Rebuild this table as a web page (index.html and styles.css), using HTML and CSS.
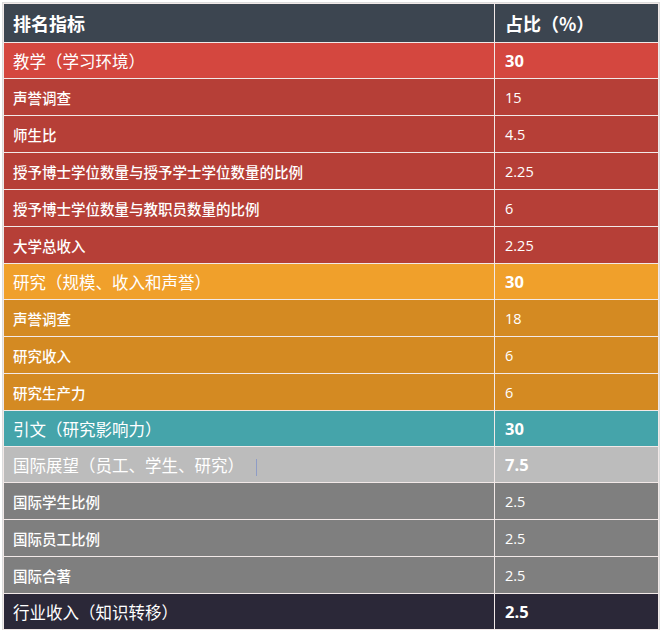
FILE: index.html
```html
<!DOCTYPE html>
<html lang="zh">
<head>
<meta charset="utf-8">
<link rel="stylesheet" href="styles.css">
</head>
<body>
<table class="rank">
  <thead>
    <tr class="head"><th>排名指标</th><th>占比（%）</th></tr>
  </thead>
  <tbody>
    <tr class="cat teach"><td>教学（学习环境）</td><td class="num">30</td></tr>
    <tr class="sub teach-sub"><td>声誉调查</td><td class="num">15</td></tr>
    <tr class="sub teach-sub"><td>师生比</td><td class="num">4.5</td></tr>
    <tr class="sub teach-sub"><td>授予博士学位数量与授予学士学位数量的比例</td><td class="num">2.25</td></tr>
    <tr class="sub teach-sub"><td>授予博士学位数量与教职员数量的比例</td><td class="num">6</td></tr>
    <tr class="sub teach-sub"><td>大学总收入</td><td class="num">2.25</td></tr>
    <tr class="cat research"><td>研究（规模、收入和声誉）</td><td class="num">30</td></tr>
    <tr class="sub research-sub"><td>声誉调查</td><td class="num">18</td></tr>
    <tr class="sub research-sub"><td>研究收入</td><td class="num">6</td></tr>
    <tr class="sub research-sub"><td>研究生产力</td><td class="num">6</td></tr>
    <tr class="cat cite"><td>引文（研究影响力）</td><td class="num">30</td></tr>
    <tr class="cat intl"><td>国际展望（员工、学生、研究）<span class="caret"></span></td><td class="num">7.5</td></tr>
    <tr class="sub intl-sub"><td>国际学生比例</td><td class="num">2.5</td></tr>
    <tr class="sub intl-sub"><td>国际员工比例</td><td class="num">2.5</td></tr>
    <tr class="sub intl-sub"><td>国际合著</td><td class="num">2.5</td></tr>
    <tr class="cat industry"><td>行业收入（知识转移）</td><td class="num">2.5</td></tr>
  </tbody>
</table>
</body>
</html>
```

FILE: styles.css
```css
html, body {
  margin: 0;
  padding: 0;
  background: #ffffff;
}
body {
  padding: 3px 0 0 3px;
  font-family: "Noto Sans CJK SC", "Microsoft YaHei", sans-serif;
  color: #ffffff;
}
.rank {
  border-collapse: collapse;
  width: 656px;
  table-layout: fixed;
  outline: 1px solid #dcdcdc;
}
.rank th, .rank td {
  border: 1px solid #f2e9e8;
  padding: 0 0 0 9px;
  text-align: left;
  vertical-align: middle;
  white-space: nowrap;
}
.rank th:first-child, .rank td:first-child {
  width: 481px;
}
.head th {
  height: 38px;
  background: #3c4550;
  font-size: 18px;
  font-weight: 700;
}
.head th:last-child {
  padding-left: 10px;
}
.cat td {
  height: 35px;
  font-size: 16.5px;
  font-weight: 400;
}
.sub td {
  height: 36px;
  font-size: 14.5px;
  font-weight: 500;
}
.num {
  font-family: "Open Sans", "Noto Sans", sans-serif;
  padding-left: 10px !important;
}
.cat .num {
  font-size: 16.5px;
  font-weight: 700;
}
.sub .num {
  font-size: 14.5px;
  font-weight: 400;
}
.teach td { background: #d4473f; }
.teach-sub td { background: #b63f37; }
.research td { background: #f0a02b; }
.research-sub td { background: #d48a22; }
.cite td { background: #45a4aa; }
.intl td { background: #bcbcbc; }
.intl-sub td { background: #7f7f7f; }
.industry td { background: #2b2838; }
.caret {
  display: inline-block;
  width: 1px;
  height: 17px;
  background: #8e9cc6;
  margin-left: 12px;
  vertical-align: middle;
}
```
